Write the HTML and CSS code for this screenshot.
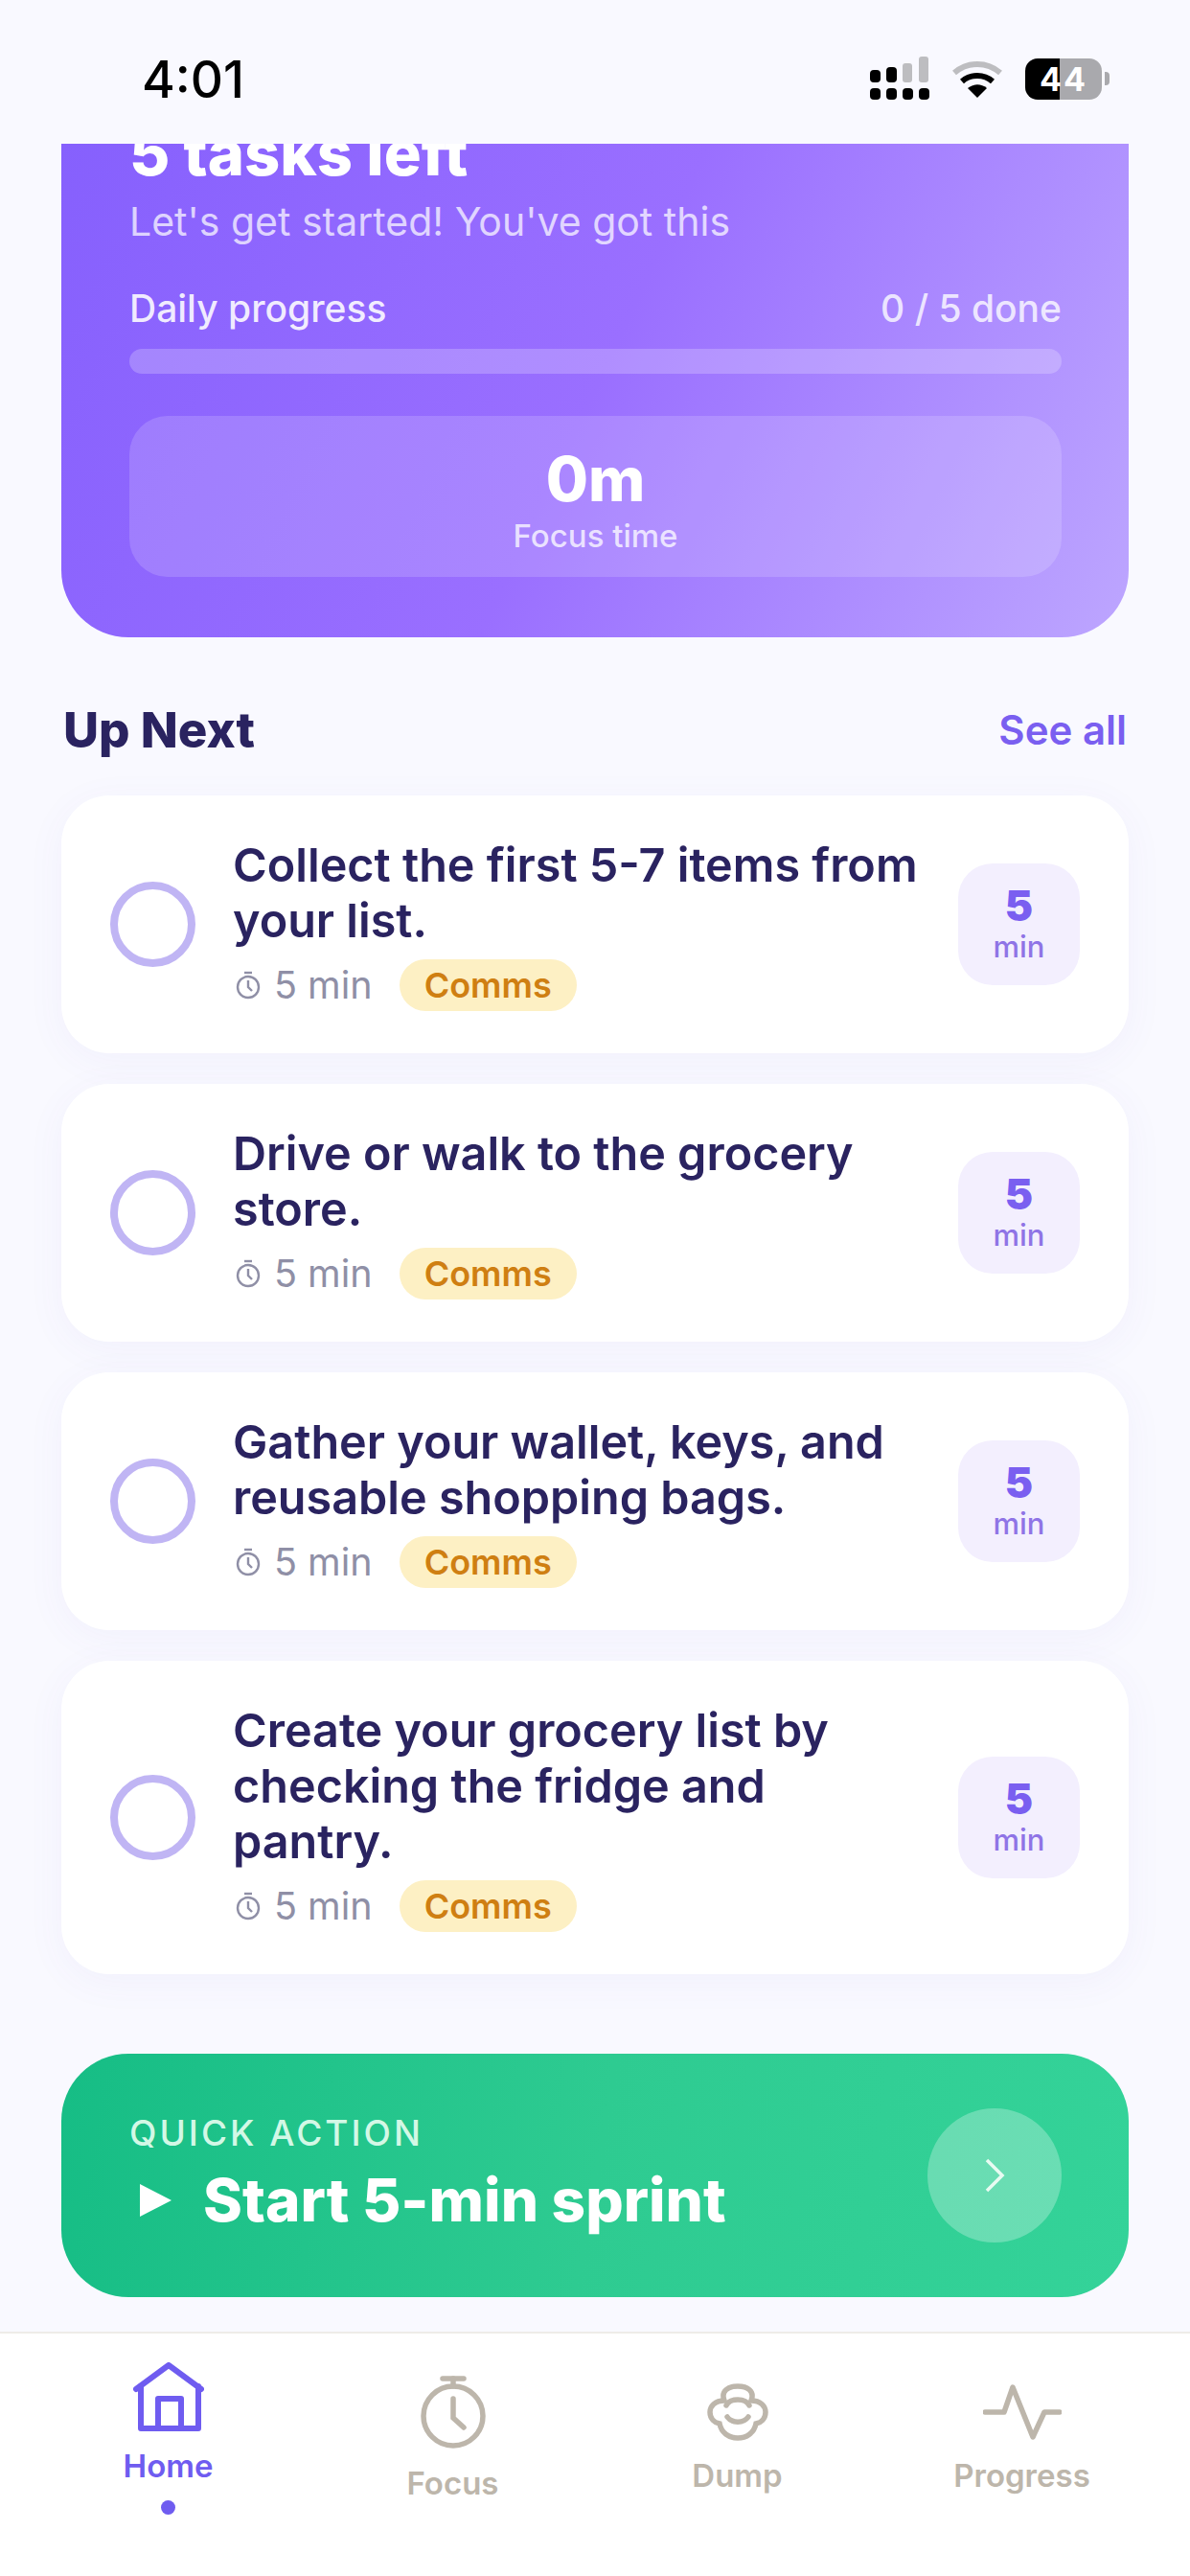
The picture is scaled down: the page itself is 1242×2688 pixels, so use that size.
FILE: index.html
```html
<!DOCTYPE html>
<html lang="en">
<head>
  <meta charset="UTF-8" />
  <meta name="viewport" content="width=device-width, initial-scale=1.0" />
  <title>Home</title>
  <link rel="stylesheet" href="styles.css">
</head>
<body>
  <div class="app">
    <header class="status-bar">
      <span class="clock">4:01</span>
      <div class="status-icons">
        <svg class="signal" width="64" height="46" viewBox="0 0 64 46">
          <g fill="#000">
            <rect x="1" y="14" width="11" height="13" rx="4"/>
            <rect x="18" y="11" width="11" height="16" rx="4"/>
            <rect x="1" y="33" width="11" height="12" rx="4"/>
            <rect x="18" y="33" width="11" height="12" rx="4"/>
            <rect x="35" y="33" width="11" height="12" rx="4"/>
            <rect x="52" y="33" width="11" height="12" rx="4"/>
          </g>
          <g fill="#bdbdc0">
            <rect x="35" y="7" width="10" height="20" rx="3"/>
            <rect x="52" y="0" width="10" height="27" rx="3"/>
          </g>
        </svg>
        <svg class="wifi" width="54" height="40" viewBox="0 0 54 40" fill="none">
          <path d="M3 13C17 1 37 1 51 13" stroke="#bdbdc0" stroke-width="6"/>
          <path d="M11 22C20 14 34 14 43 22" stroke="#000" stroke-width="6"/>
          <path d="M27 39L17 29C23 24 31 24 37 29Z" fill="#000"/>
        </svg>
        <div class="battery">
          <div class="battery-body"><span class="battery-level">44</span></div>
          <div class="battery-nub"></div>
        </div>
      </div>
    </header>

    <main class="content">
      <section class="hero">
        <h1 class="hero-title">5 tasks left</h1>
        <p class="hero-sub">Let's get started! You've got this</p>
        <div class="progress-row">
          <span>Daily progress</span>
          <span class="progress-count">0 / 5 done</span>
        </div>
        <div class="progress-track"></div>
        <div class="focus-box">
          <div class="focus-value">0m</div>
          <div class="focus-label">Focus time</div>
        </div>
      </section>

      <div class="section-head">
        <h2>Up Next</h2>
        <a class="see-all">See all</a>
      </div>

      <div class="task-list">
        <article class="task">
          <div class="task-check"></div>
          <div class="task-body">
            <div class="task-title">Collect the first 5-7 items from your list.</div>
            <div class="task-meta">
              <svg class="meta-clock" width="28" height="30" viewBox="0 0 28 30" fill="none"><path d="M10 2h8" stroke="#8f8fa6" stroke-width="2.4"/><circle cx="14" cy="17" r="11" stroke="#8f8fa6" stroke-width="2.4"/><path d="M14 10v7l4 4" stroke="#8f8fa6" stroke-width="2.4"/></svg>
              <span class="meta-time">5 min</span>
              <span class="chip">Comms</span>
            </div>
          </div>
          <div class="task-badge"><b>5</b><span>min</span></div>
        </article>

        <article class="task">
          <div class="task-check"></div>
          <div class="task-body">
            <div class="task-title">Drive or walk to the grocery store.</div>
            <div class="task-meta">
              <svg class="meta-clock" width="28" height="30" viewBox="0 0 28 30" fill="none"><path d="M10 2h8" stroke="#8f8fa6" stroke-width="2.4"/><circle cx="14" cy="17" r="11" stroke="#8f8fa6" stroke-width="2.4"/><path d="M14 10v7l4 4" stroke="#8f8fa6" stroke-width="2.4"/></svg>
              <span class="meta-time">5 min</span>
              <span class="chip">Comms</span>
            </div>
          </div>
          <div class="task-badge"><b>5</b><span>min</span></div>
        </article>

        <article class="task">
          <div class="task-check"></div>
          <div class="task-body">
            <div class="task-title">Gather your wallet, keys, and reusable shopping bags.</div>
            <div class="task-meta">
              <svg class="meta-clock" width="28" height="30" viewBox="0 0 28 30" fill="none"><path d="M10 2h8" stroke="#8f8fa6" stroke-width="2.4"/><circle cx="14" cy="17" r="11" stroke="#8f8fa6" stroke-width="2.4"/><path d="M14 10v7l4 4" stroke="#8f8fa6" stroke-width="2.4"/></svg>
              <span class="meta-time">5 min</span>
              <span class="chip">Comms</span>
            </div>
          </div>
          <div class="task-badge"><b>5</b><span>min</span></div>
        </article>

        <article class="task">
          <div class="task-check"></div>
          <div class="task-body">
            <div class="task-title">Create your grocery list by checking the fridge and pantry.</div>
            <div class="task-meta">
              <svg class="meta-clock" width="28" height="30" viewBox="0 0 28 30" fill="none"><path d="M10 2h8" stroke="#8f8fa6" stroke-width="2.4"/><circle cx="14" cy="17" r="11" stroke="#8f8fa6" stroke-width="2.4"/><path d="M14 10v7l4 4" stroke="#8f8fa6" stroke-width="2.4"/></svg>
              <span class="meta-time">5 min</span>
              <span class="chip">Comms</span>
            </div>
          </div>
          <div class="task-badge"><b>5</b><span>min</span></div>
        </article>
      </div>

      <section class="sprint">
        <div class="sprint-text">
          <div class="sprint-label">QUICK ACTION</div>
          <div class="sprint-title">
            <svg width="36" height="36" viewBox="0 0 36 36"><path d="M2 1L35 18L2 35Z" fill="#fff"/></svg>
            <span>Start 5-min sprint</span>
          </div>
        </div>
        <div class="sprint-go">
          <svg width="24" height="38" viewBox="0 0 24 38" fill="none"><path d="M4 3L20 19L4 35" stroke="#e8fbf2" stroke-width="3.5"/></svg>
        </div>
      </section>
    </main>

    <nav class="tabbar">
      <div class="tab tab-active">
        <svg width="74" height="72" viewBox="0 0 74 72" fill="none" stroke="#6f5cf0" stroke-width="6" stroke-linejoin="round" stroke-linecap="round">
          <path d="M3 28L37 3L71 28"/>
          <path d="M8 25V69H68V25"/>
          <path d="M26 69V38H50V69"/>
        </svg>
        <span>Home</span>
        <i class="tab-dot"></i>
      </div>
      <div class="tab">
        <svg width="68" height="76" viewBox="0 0 68 76" fill="none" stroke="#bdb6ab" stroke-width="5.5" stroke-linecap="round">
          <path d="M23 3H45"/>
          <path d="M34 3V11"/>
          <circle cx="34" cy="42" r="31"/>
          <path d="M34 24V44L45 54"/>
        </svg>
        <span>Focus</span>
      </div>
      <div class="tab">
        <svg width="64" height="60" viewBox="0 0 64 60" fill="none" stroke="#bdb6ab" stroke-width="5.5" stroke-linecap="round">
          <path d="M18 18C14 8 22 3 32 3C42 3 50 8 46 18C56 18 61 24 61 30C61 37 56 41 51 42C49 52 41 57 32 57C23 57 15 52 13 42C8 41 3 37 3 30C3 24 8 18 18 18Z"/>
          <path d="M20 23C24 15 40 15 44 23"/>
          <path d="M21 35C26 42 38 42 43 35"/>
        </svg>
        <span>Dump</span>
      </div>
      <div class="tab">
        <svg width="82" height="60" viewBox="0 0 82 60" fill="none" stroke="#bdb6ab" stroke-width="5.5" stroke-linejoin="round" stroke-linecap="round">
          <path d="M2 30H22L31 4L52 56L64 30H80"/>
        </svg>
        <span>Progress</span>
      </div>
    </nav>
  </div>
</body>
</html>
```

FILE: styles.css
```css
* {
  margin: 0;
  padding: 0;
  box-sizing: border-box;
}

body {
  font-family: 'Inter', 'Liberation Sans', sans-serif;
  background: #f9f9ff;
  color: #2a2360;
}

.app {
  width: 1242px;
  height: 2688px;
  display: flex;
  flex-direction: column;
  overflow: hidden;
}

/* status bar */
.status-bar {
  height: 150px;
  flex-shrink: 0;
  display: flex;
  justify-content: space-between;
  padding: 56px 84px 0 148px;
}

.clock {
  font-size: 53px;
  font-weight: 500;
  line-height: 54px;
  color: #000;
}

.status-icons {
  display: flex;
  gap: 22px;
  height: 46px;
  margin-top: 3px;
}

.wifi {
  margin-top: 4px;
}

.battery {
  display: flex;
  align-items: center;
  gap: 3px;
  margin-left: 1px;
}

.battery-body {
  width: 80px;
  height: 43px;
  border-radius: 13px;
  background: linear-gradient(90deg, #000 45%, #a9a9ad 45%);
  display: flex;
  align-items: center;
  justify-content: center;
}

.battery-level {
  color: #fff;
  font-size: 34px;
  font-weight: 700;
  letter-spacing: 2px;
}

.battery-nub {
  width: 5px;
  height: 14px;
  background: #a9a9ad;
  border-radius: 0 4px 4px 0;
}

/* main column */
.content {
  flex: 1;
  padding: 0 64px;
  display: flex;
  flex-direction: column;
}

.hero {
  height: 515px;
  border-radius: 0 0 70px 70px;
  background: linear-gradient(115deg, #8660fd 0%, #9a6fff 50%, #bda6ff 100%);
  padding: 0 70px 0 71px;
  overflow: hidden;
  color: #fff;
}

.hero-title {
  font-size: 65px;
  font-weight: 800;
  line-height: 60px;
  margin-top: -20px;
}

.hero-sub {
  font-size: 41px;
  line-height: 46px;
  margin-top: 18px;
  color: rgba(255, 255, 255, 0.72);
}

.progress-row {
  display: flex;
  justify-content: space-between;
  font-size: 39px;
  font-weight: 500;
  line-height: 44px;
  margin-top: 46px;
  color: rgba(255, 255, 255, 0.88);
}

.progress-count {
  color: rgba(255, 255, 255, 0.8);
}

.progress-track {
  height: 26px;
  border-radius: 13px;
  background: rgba(255, 255, 255, 0.22);
  margin-top: 20px;
}

.focus-box {
  height: 168px;
  margin-top: 44px;
  border-radius: 40px;
  background: rgba(255, 255, 255, 0.16);
  text-align: center;
  padding-top: 33px;
}

.focus-value {
  font-size: 64px;
  font-weight: 800;
  line-height: 66px;
}

.focus-label {
  font-size: 33px;
  font-weight: 500;
  line-height: 38px;
  margin-top: 7px;
  color: rgba(255, 255, 255, 0.75);
}

.section-head {
  display: flex;
  justify-content: space-between;
  align-items: center;
  margin-top: 66px;
  padding: 0 2px;
  height: 60px;
}

.section-head h2 {
  font-size: 51px;
  font-weight: 800;
  color: #2a2360;
}

.see-all {
  font-size: 42px;
  font-weight: 600;
  color: #7a5ff0;
}

/* task cards */
.task-list {
  display: flex;
  flex-direction: column;
  gap: 32px;
  margin-top: 39px;
}

.task {
  display: flex;
  align-items: center;
  background: #fff;
  border-radius: 50px;
  padding: 44px 51px;
  box-shadow: 0 8px 40px rgba(90, 70, 200, 0.05);
}

.task-check {
  width: 89px;
  height: 89px;
  border: 8px solid #c0b5f4;
  border-radius: 50%;
  flex-shrink: 0;
}

.task-body {
  flex: 1;
  padding-left: 39px;
  padding-right: 30px;
}

.task-title {
  font-size: 48.5px;
  font-weight: 600;
  line-height: 58px;
  color: #2a2360;
}

.task-meta {
  display: flex;
  align-items: center;
  margin-top: 11px;
  height: 54px;
}

.meta-clock {
  margin-left: 2px;
}

.meta-time {
  font-size: 39.5px;
  color: #8f8fa6;
  margin-left: 13px;
}

.chip {
  margin-left: 28px;
  height: 54px;
  line-height: 54px;
  padding: 0 26px;
  border-radius: 27px;
  background: #fdf0c4;
  color: #cf7f12;
  font-size: 36px;
  font-weight: 600;
}

.task-badge {
  width: 127px;
  height: 127px;
  flex-shrink: 0;
  border-radius: 36px;
  background: #f3effe;
  display: flex;
  flex-direction: column;
  align-items: center;
  justify-content: center;
  color: #7a5ff0;
}

.task-badge b {
  font-size: 44px;
  font-weight: 900;
  line-height: 46px;
}

.task-badge span {
  font-size: 31px;
  font-weight: 500;
  line-height: 40px;
  color: #8f74e6;
}

/* quick action */
.sprint {
  margin-top: 83px;
  height: 254px;
  border-radius: 70px;
  background: linear-gradient(100deg, #16bd85 0%, #2ecb91 50%, #34d399 100%);
  display: flex;
  align-items: center;
  justify-content: space-between;
  padding: 0 70px 0 71px;
  color: #fff;
}

.sprint-label {
  font-size: 37px;
  font-weight: 500;
  letter-spacing: 3px;
  line-height: 44px;
  color: #d3f8e6;
}

.sprint-title {
  display: flex;
  align-items: center;
  gap: 32px;
  margin-top: 14px;
  margin-bottom: 6px;
  padding-left: 9px;
  font-size: 62px;
  font-weight: 800;
  line-height: 68px;
}

.sprint-go {
  width: 140px;
  height: 140px;
  border-radius: 50%;
  background: rgba(255, 255, 255, 0.27);
  display: flex;
  align-items: center;
  justify-content: center;
}

/* bottom nav */
.tabbar {
  height: 255px;
  flex-shrink: 0;
  background: #fff;
  border-top: 2px solid #eeece8;
  display: grid;
  grid-template-columns: repeat(4, 297px);
  padding: 0 27px 34px;
  align-items: center;
}

.tab {
  display: flex;
  flex-direction: column;
  align-items: center;
  gap: 16px;
  font-size: 33px;
  font-weight: 600;
  color: #bdb6ab;
}

.tab-active {
  color: #6f5cf0;
}

.tab-dot {
  width: 15px;
  height: 15px;
  border-radius: 50%;
  background: #6f5cf0;
}
```
